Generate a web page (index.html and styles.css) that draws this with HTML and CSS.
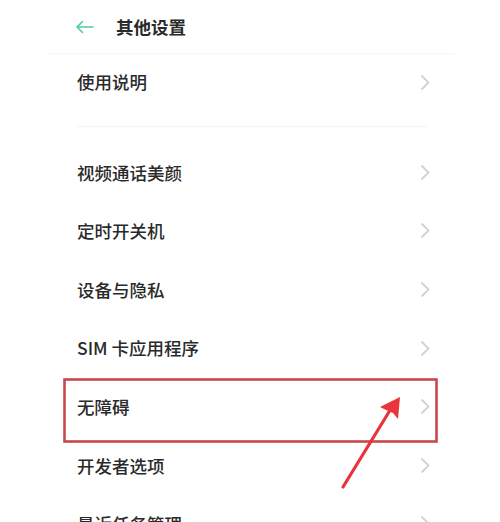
FILE: index.html
```html
<!DOCTYPE html>
<html lang="zh-CN">
<head>
<meta charset="utf-8">
<link rel="stylesheet" href="styles.css">
</head>
<body>
<div class="page">
  <header class="topbar">
    <svg class="back" width="19" height="14" viewBox="0 0 19 14"><path d="M18 7H2M7.5 1.5L2 7l5.5 5.5" fill="none" stroke="#4ecba3" stroke-width="1.6" stroke-linecap="round" stroke-linejoin="round"/></svg>
    <h1 class="title">其他设置</h1>
  </header>
  <section class="group first">
    <div class="row"><span>使用说明</span><svg class="chev" width="10" height="17" viewBox="0 0 10 17"><path d="M1.5 1.5l7 7-7 7" fill="none" stroke="#d2d2d2" stroke-width="1.8"/></svg></div>
  </section>
  <div class="divider"></div>
  <section class="group second">
    <div class="row"><span>视频通话美颜</span><svg class="chev" width="10" height="17" viewBox="0 0 10 17"><path d="M1.5 1.5l7 7-7 7" fill="none" stroke="#d2d2d2" stroke-width="1.8"/></svg></div>
    <div class="row"><span>定时开关机</span><svg class="chev" width="10" height="17" viewBox="0 0 10 17"><path d="M1.5 1.5l7 7-7 7" fill="none" stroke="#d2d2d2" stroke-width="1.8"/></svg></div>
    <div class="row"><span>设备与隐私</span><svg class="chev" width="10" height="17" viewBox="0 0 10 17"><path d="M1.5 1.5l7 7-7 7" fill="none" stroke="#d2d2d2" stroke-width="1.8"/></svg></div>
    <div class="row"><span>SIM 卡应用程序</span><svg class="chev" width="10" height="17" viewBox="0 0 10 17"><path d="M1.5 1.5l7 7-7 7" fill="none" stroke="#d2d2d2" stroke-width="1.8"/></svg></div>
    <div class="row"><span>无障碍</span><svg class="chev" width="10" height="17" viewBox="0 0 10 17"><path d="M1.5 1.5l7 7-7 7" fill="none" stroke="#d2d2d2" stroke-width="1.8"/></svg></div>
    <div class="row"><span>开发者选项</span><svg class="chev" width="10" height="17" viewBox="0 0 10 17"><path d="M1.5 1.5l7 7-7 7" fill="none" stroke="#d2d2d2" stroke-width="1.8"/></svg></div>
    <div class="row"><span>最近任务管理</span><svg class="chev" width="10" height="17" viewBox="0 0 10 17"><path d="M1.5 1.5l7 7-7 7" fill="none" stroke="#d2d2d2" stroke-width="1.8"/></svg></div>
  </section>
  <svg class="annotation" width="500" height="522" viewBox="0 0 500 522">
    <rect x="64.5" y="379.5" width="372" height="62" fill="none" stroke="#c8474b" stroke-width="2.6"/>
    <path d="M343 487 L392 407" stroke="#e8343a" stroke-width="3.2" stroke-linecap="round" fill="none"/>
    <path d="M343 487 L390 410" stroke="#e8343a" stroke-width="1.2" fill="none"/>
    <polygon points="400,397 398,419 393,413 386,410 380,407" fill="#e8343a"/>
  </svg>
</div>
</body>
</html>
```
FILE: styles.css
```css
* { box-sizing: border-box; margin: 0; padding: 0; }
html, body { background: #fff; }
body {
  width: 500px;
  height: 522px;
  overflow: hidden;
  font-family: "Noto Sans CJK SC", "Noto Sans", sans-serif;
  color: #2a2a2a;
}
.page { position: relative; width: 500px; height: 522px; }
.topbar {
  height: 54px;
  display: flex;
  align-items: center;
  padding-top: 1px;
  border-bottom: 1px solid #f6f6f6;
  margin: 0 45px 0 48px;
  padding-left: 27px;
}
.back { flex: none; margin-right: 22px; }
.title { font-size: 17.5px; font-weight: 700; letter-spacing: 0; line-height: 1; }
.group { padding: 0 70px 0 77px; }
.group.first .row { height: 56px; }
.divider { height: 1px; background: #f4f4f4; margin: 16px 72px 0 77px; }
.group.second { padding-top: 16px; }
.row {
  height: 58.6px;
  display: flex;
  align-items: center;
  justify-content: space-between;
  font-size: 17.5px;
  font-weight: 500;
  line-height: 1;
}
.chev { flex: none; }
.annotation { position: absolute; left: 0; top: 0; pointer-events: none; }
```
